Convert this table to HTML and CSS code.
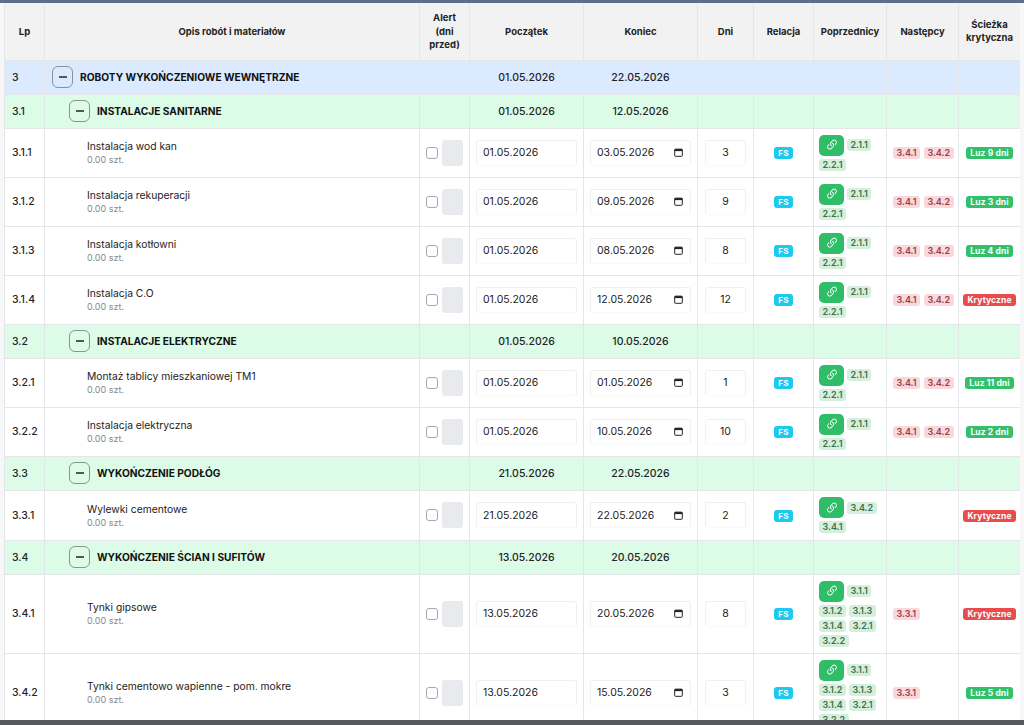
FILE: index.html
```html
<!DOCTYPE html>
<html lang="pl">
<head>
<meta charset="utf-8">
<title>Harmonogram</title>
<link rel="stylesheet" href="styles.css">
</head>
<body>
<div class="screen">
  <div class="topbar"></div>
  <div class="viewport">
    <div class="gutter gutter-left"></div>
    <div class="table-wrap">
      <table class="grid">
        <colgroup>
          <col class="c-lp"><col class="c-opis"><col class="c-alert"><col class="c-date"><col class="c-date">
          <col class="c-dni"><col class="c-rel"><col class="c-prev"><col class="c-next"><col class="c-crit">
        </colgroup>
        <thead>
          <tr class="head">
            <th>Lp</th>
            <th>Opis robót i materiałów</th>
            <th>Alert<br>(dni<br>przed)</th>
            <th>Początek</th>
            <th>Koniec</th>
            <th>Dni</th>
            <th>Relacja</th>
            <th>Poprzednicy</th>
            <th>Następcy</th>
            <th>Ścieżka<br>krytyczna</th>
          </tr>
        </thead>
        <tbody>
          <tr class="group lvl1">
            <td class="lp">3</td>
            <td class="opis"><div class="gtitle"><span class="toggle"></span><span>ROBOTY WYKOŃCZENIOWE WEWNĘTRZNE</span></div></td>
            <td></td><td class="gdate">01.05.2026</td><td class="gdate">22.05.2026</td><td></td><td></td><td></td><td></td><td></td>
          </tr>
          <tr class="group lvl2">
            <td class="lp">3.1</td>
            <td class="opis"><div class="gtitle sub"><span class="toggle"></span><span>INSTALACJE SANITARNE</span></div></td>
            <td></td><td class="gdate">01.05.2026</td><td class="gdate">12.05.2026</td><td></td><td></td><td></td><td></td><td></td>
          </tr>

          <tr class="item">
            <td class="lp">3.1.1</td>
            <td class="opis"><div class="iname">Instalacja wod kan</div><div class="iqty">0.00 szt.</div></td>
            <td class="alert"><div class="alert-box"><input type="checkbox" class="chk"><span class="days"></span></div></td>
            <td class="pad"><div class="field">01.05.2026</div></td>
            <td class="pad"><div class="field">03.05.2026<svg class="cal" viewBox="0 0 10 10"><rect x="0.75" y="1.25" width="8.5" height="8" rx="1" fill="none" stroke="#222" stroke-width="1.1"/><rect x="0.75" y="1.25" width="8.5" height="2.2" fill="#222"/></svg></div></td>
            <td class="pad-dni"><div class="field num">3</div></td>
            <td class="center"><span class="fs">FS</span></td>
            <td class="prev"><div class="chips"><span class="link"><svg viewBox="0 0 16 16"><path fill="#fff" d="M4.715 6.542 3.343 7.914a3 3 0 1 0 4.243 4.243l1.828-1.829A3 3 0 0 0 8.586 5.5L8 6.086a1 1 0 0 0-.154.199 2 2 0 0 1 .861 3.337L6.88 11.45a2 2 0 1 1-2.83-2.83l.793-.792a4 4 0 0 1-.128-1.287z"/><path fill="#fff" d="M6.586 4.672A3 3 0 0 0 7.414 9.5l.775-.776a2 2 0 0 1-.896-3.346L9.12 3.55a2 2 0 1 1 2.83 2.83l-.793.792c.112.42.155.855.128 1.287l1.372-1.372a3 3 0 1 0-4.243-4.243z"/></svg></span><span class="chip g">2.1.1</span><span class="chip g">2.2.1</span></div></td>
            <td class="next"><div class="chips"><span class="chip r">3.4.1</span><span class="chip r">3.4.2</span></div></td>
            <td class="center"><span class="crit ok">Luz 9 dni</span></td>
          </tr>

          <tr class="item">
            <td class="lp">3.1.2</td>
            <td class="opis"><div class="iname">Instalacja rekuperacji</div><div class="iqty">0.00 szt.</div></td>
            <td class="alert"><div class="alert-box"><input type="checkbox" class="chk"><span class="days"></span></div></td>
            <td class="pad"><div class="field">01.05.2026</div></td>
            <td class="pad"><div class="field">09.05.2026<svg class="cal" viewBox="0 0 10 10"><rect x="0.75" y="1.25" width="8.5" height="8" rx="1" fill="none" stroke="#222" stroke-width="1.1"/><rect x="0.75" y="1.25" width="8.5" height="2.2" fill="#222"/></svg></div></td>
            <td class="pad-dni"><div class="field num">9</div></td>
            <td class="center"><span class="fs">FS</span></td>
            <td class="prev"><div class="chips"><span class="link"><svg viewBox="0 0 16 16"><path fill="#fff" d="M4.715 6.542 3.343 7.914a3 3 0 1 0 4.243 4.243l1.828-1.829A3 3 0 0 0 8.586 5.5L8 6.086a1 1 0 0 0-.154.199 2 2 0 0 1 .861 3.337L6.88 11.45a2 2 0 1 1-2.83-2.83l.793-.792a4 4 0 0 1-.128-1.287z"/><path fill="#fff" d="M6.586 4.672A3 3 0 0 0 7.414 9.5l.775-.776a2 2 0 0 1-.896-3.346L9.12 3.55a2 2 0 1 1 2.83 2.83l-.793.792c.112.42.155.855.128 1.287l1.372-1.372a3 3 0 1 0-4.243-4.243z"/></svg></span><span class="chip g">2.1.1</span><span class="chip g">2.2.1</span></div></td>
            <td class="next"><div class="chips"><span class="chip r">3.4.1</span><span class="chip r">3.4.2</span></div></td>
            <td class="center"><span class="crit ok">Luz 3 dni</span></td>
          </tr>

          <tr class="item">
            <td class="lp">3.1.3</td>
            <td class="opis"><div class="iname">Instalacja kotłowni</div><div class="iqty">0.00 szt.</div></td>
            <td class="alert"><div class="alert-box"><input type="checkbox" class="chk"><span class="days"></span></div></td>
            <td class="pad"><div class="field">01.05.2026</div></td>
            <td class="pad"><div class="field">08.05.2026<svg class="cal" viewBox="0 0 10 10"><rect x="0.75" y="1.25" width="8.5" height="8" rx="1" fill="none" stroke="#222" stroke-width="1.1"/><rect x="0.75" y="1.25" width="8.5" height="2.2" fill="#222"/></svg></div></td>
            <td class="pad-dni"><div class="field num">8</div></td>
            <td class="center"><span class="fs">FS</span></td>
            <td class="prev"><div class="chips"><span class="link"><svg viewBox="0 0 16 16"><path fill="#fff" d="M4.715 6.542 3.343 7.914a3 3 0 1 0 4.243 4.243l1.828-1.829A3 3 0 0 0 8.586 5.5L8 6.086a1 1 0 0 0-.154.199 2 2 0 0 1 .861 3.337L6.88 11.45a2 2 0 1 1-2.83-2.83l.793-.792a4 4 0 0 1-.128-1.287z"/><path fill="#fff" d="M6.586 4.672A3 3 0 0 0 7.414 9.5l.775-.776a2 2 0 0 1-.896-3.346L9.12 3.55a2 2 0 1 1 2.83 2.83l-.793.792c.112.42.155.855.128 1.287l1.372-1.372a3 3 0 1 0-4.243-4.243z"/></svg></span><span class="chip g">2.1.1</span><span class="chip g">2.2.1</span></div></td>
            <td class="next"><div class="chips"><span class="chip r">3.4.1</span><span class="chip r">3.4.2</span></div></td>
            <td class="center"><span class="crit ok">Luz 4 dni</span></td>
          </tr>

          <tr class="item">
            <td class="lp">3.1.4</td>
            <td class="opis"><div class="iname">Instalacja C.O</div><div class="iqty">0.00 szt.</div></td>
            <td class="alert"><div class="alert-box"><input type="checkbox" class="chk"><span class="days"></span></div></td>
            <td class="pad"><div class="field">01.05.2026</div></td>
            <td class="pad"><div class="field">12.05.2026<svg class="cal" viewBox="0 0 10 10"><rect x="0.75" y="1.25" width="8.5" height="8" rx="1" fill="none" stroke="#222" stroke-width="1.1"/><rect x="0.75" y="1.25" width="8.5" height="2.2" fill="#222"/></svg></div></td>
            <td class="pad-dni"><div class="field num">12</div></td>
            <td class="center"><span class="fs">FS</span></td>
            <td class="prev"><div class="chips"><span class="link"><svg viewBox="0 0 16 16"><path fill="#fff" d="M4.715 6.542 3.343 7.914a3 3 0 1 0 4.243 4.243l1.828-1.829A3 3 0 0 0 8.586 5.5L8 6.086a1 1 0 0 0-.154.199 2 2 0 0 1 .861 3.337L6.88 11.45a2 2 0 1 1-2.83-2.83l.793-.792a4 4 0 0 1-.128-1.287z"/><path fill="#fff" d="M6.586 4.672A3 3 0 0 0 7.414 9.5l.775-.776a2 2 0 0 1-.896-3.346L9.12 3.55a2 2 0 1 1 2.83 2.83l-.793.792c.112.42.155.855.128 1.287l1.372-1.372a3 3 0 1 0-4.243-4.243z"/></svg></span><span class="chip g">2.1.1</span><span class="chip g">2.2.1</span></div></td>
            <td class="next"><div class="chips"><span class="chip r">3.4.1</span><span class="chip r">3.4.2</span></div></td>
            <td class="center"><span class="crit bad">Krytyczne</span></td>
          </tr>

          <tr class="group lvl2">
            <td class="lp">3.2</td>
            <td class="opis"><div class="gtitle sub"><span class="toggle"></span><span>INSTALACJE ELEKTRYCZNE</span></div></td>
            <td></td><td class="gdate">01.05.2026</td><td class="gdate">10.05.2026</td><td></td><td></td><td></td><td></td><td></td>
          </tr>

          <tr class="item">
            <td class="lp">3.2.1</td>
            <td class="opis"><div class="iname">Montaż tablicy mieszkaniowej TM1</div><div class="iqty">0.00 szt.</div></td>
            <td class="alert"><div class="alert-box"><input type="checkbox" class="chk"><span class="days"></span></div></td>
            <td class="pad"><div class="field">01.05.2026</div></td>
            <td class="pad"><div class="field">01.05.2026<svg class="cal" viewBox="0 0 10 10"><rect x="0.75" y="1.25" width="8.5" height="8" rx="1" fill="none" stroke="#222" stroke-width="1.1"/><rect x="0.75" y="1.25" width="8.5" height="2.2" fill="#222"/></svg></div></td>
            <td class="pad-dni"><div class="field num">1</div></td>
            <td class="center"><span class="fs">FS</span></td>
            <td class="prev"><div class="chips"><span class="link"><svg viewBox="0 0 16 16"><path fill="#fff" d="M4.715 6.542 3.343 7.914a3 3 0 1 0 4.243 4.243l1.828-1.829A3 3 0 0 0 8.586 5.5L8 6.086a1 1 0 0 0-.154.199 2 2 0 0 1 .861 3.337L6.88 11.45a2 2 0 1 1-2.83-2.83l.793-.792a4 4 0 0 1-.128-1.287z"/><path fill="#fff" d="M6.586 4.672A3 3 0 0 0 7.414 9.5l.775-.776a2 2 0 0 1-.896-3.346L9.12 3.55a2 2 0 1 1 2.83 2.83l-.793.792c.112.42.155.855.128 1.287l1.372-1.372a3 3 0 1 0-4.243-4.243z"/></svg></span><span class="chip g">2.1.1</span><span class="chip g">2.2.1</span></div></td>
            <td class="next"><div class="chips"><span class="chip r">3.4.1</span><span class="chip r">3.4.2</span></div></td>
            <td class="center"><span class="crit ok">Luz 11 dni</span></td>
          </tr>

          <tr class="item">
            <td class="lp">3.2.2</td>
            <td class="opis"><div class="iname">Instalacja elektryczna</div><div class="iqty">0.00 szt.</div></td>
            <td class="alert"><div class="alert-box"><input type="checkbox" class="chk"><span class="days"></span></div></td>
            <td class="pad"><div class="field">01.05.2026</div></td>
            <td class="pad"><div class="field">10.05.2026<svg class="cal" viewBox="0 0 10 10"><rect x="0.75" y="1.25" width="8.5" height="8" rx="1" fill="none" stroke="#222" stroke-width="1.1"/><rect x="0.75" y="1.25" width="8.5" height="2.2" fill="#222"/></svg></div></td>
            <td class="pad-dni"><div class="field num">10</div></td>
            <td class="center"><span class="fs">FS</span></td>
            <td class="prev"><div class="chips"><span class="link"><svg viewBox="0 0 16 16"><path fill="#fff" d="M4.715 6.542 3.343 7.914a3 3 0 1 0 4.243 4.243l1.828-1.829A3 3 0 0 0 8.586 5.5L8 6.086a1 1 0 0 0-.154.199 2 2 0 0 1 .861 3.337L6.88 11.45a2 2 0 1 1-2.83-2.83l.793-.792a4 4 0 0 1-.128-1.287z"/><path fill="#fff" d="M6.586 4.672A3 3 0 0 0 7.414 9.5l.775-.776a2 2 0 0 1-.896-3.346L9.12 3.55a2 2 0 1 1 2.83 2.83l-.793.792c.112.42.155.855.128 1.287l1.372-1.372a3 3 0 1 0-4.243-4.243z"/></svg></span><span class="chip g">2.1.1</span><span class="chip g">2.2.1</span></div></td>
            <td class="next"><div class="chips"><span class="chip r">3.4.1</span><span class="chip r">3.4.2</span></div></td>
            <td class="center"><span class="crit ok">Luz 2 dni</span></td>
          </tr>

          <tr class="group lvl2">
            <td class="lp">3.3</td>
            <td class="opis"><div class="gtitle sub"><span class="toggle"></span><span>WYKOŃCZENIE PODŁÓG</span></div></td>
            <td></td><td class="gdate">21.05.2026</td><td class="gdate">22.05.2026</td><td></td><td></td><td></td><td></td><td></td>
          </tr>

          <tr class="item i50">
            <td class="lp">3.3.1</td>
            <td class="opis"><div class="iname">Wylewki cementowe</div><div class="iqty">0.00 szt.</div></td>
            <td class="alert"><div class="alert-box"><input type="checkbox" class="chk"><span class="days"></span></div></td>
            <td class="pad"><div class="field">21.05.2026</div></td>
            <td class="pad"><div class="field">22.05.2026<svg class="cal" viewBox="0 0 10 10"><rect x="0.75" y="1.25" width="8.5" height="8" rx="1" fill="none" stroke="#222" stroke-width="1.1"/><rect x="0.75" y="1.25" width="8.5" height="2.2" fill="#222"/></svg></div></td>
            <td class="pad-dni"><div class="field num">2</div></td>
            <td class="center"><span class="fs">FS</span></td>
            <td class="prev"><div class="chips"><span class="link"><svg viewBox="0 0 16 16"><path fill="#fff" d="M4.715 6.542 3.343 7.914a3 3 0 1 0 4.243 4.243l1.828-1.829A3 3 0 0 0 8.586 5.5L8 6.086a1 1 0 0 0-.154.199 2 2 0 0 1 .861 3.337L6.88 11.45a2 2 0 1 1-2.83-2.83l.793-.792a4 4 0 0 1-.128-1.287z"/><path fill="#fff" d="M6.586 4.672A3 3 0 0 0 7.414 9.5l.775-.776a2 2 0 0 1-.896-3.346L9.12 3.55a2 2 0 1 1 2.83 2.83l-.793.792c.112.42.155.855.128 1.287l1.372-1.372a3 3 0 1 0-4.243-4.243z"/></svg></span><span class="chip g">3.4.2</span><span class="chip g">3.4.1</span></div></td>
            <td class="next"></td>
            <td class="center"><span class="crit bad">Krytyczne</span></td>
          </tr>

          <tr class="group lvl2">
            <td class="lp">3.4</td>
            <td class="opis"><div class="gtitle sub"><span class="toggle"></span><span>WYKOŃCZENIE ŚCIAN I SUFITÓW</span></div></td>
            <td></td><td class="gdate">13.05.2026</td><td class="gdate">20.05.2026</td><td></td><td></td><td></td><td></td><td></td>
          </tr>

          <tr class="item">
            <td class="lp">3.4.1</td>
            <td class="opis"><div class="iname">Tynki gipsowe</div><div class="iqty">0.00 szt.</div></td>
            <td class="alert"><div class="alert-box"><input type="checkbox" class="chk"><span class="days"></span></div></td>
            <td class="pad"><div class="field">13.05.2026</div></td>
            <td class="pad"><div class="field">20.05.2026<svg class="cal" viewBox="0 0 10 10"><rect x="0.75" y="1.25" width="8.5" height="8" rx="1" fill="none" stroke="#222" stroke-width="1.1"/><rect x="0.75" y="1.25" width="8.5" height="2.2" fill="#222"/></svg></div></td>
            <td class="pad-dni"><div class="field num">8</div></td>
            <td class="center"><span class="fs">FS</span></td>
            <td class="prev"><div class="chips"><span class="link"><svg viewBox="0 0 16 16"><path fill="#fff" d="M4.715 6.542 3.343 7.914a3 3 0 1 0 4.243 4.243l1.828-1.829A3 3 0 0 0 8.586 5.5L8 6.086a1 1 0 0 0-.154.199 2 2 0 0 1 .861 3.337L6.88 11.45a2 2 0 1 1-2.83-2.83l.793-.792a4 4 0 0 1-.128-1.287z"/><path fill="#fff" d="M6.586 4.672A3 3 0 0 0 7.414 9.5l.775-.776a2 2 0 0 1-.896-3.346L9.12 3.55a2 2 0 1 1 2.83 2.83l-.793.792c.112.42.155.855.128 1.287l1.372-1.372a3 3 0 1 0-4.243-4.243z"/></svg></span><span class="chip g">3.1.1</span><span class="chip g">3.1.2</span><span class="chip g">3.1.3</span><span class="chip g">3.1.4</span><span class="chip g">3.2.1</span><span class="chip g">3.2.2</span></div></td>
            <td class="next"><div class="chips"><span class="chip r">3.3.1</span></div></td>
            <td class="center"><span class="crit bad">Krytyczne</span></td>
          </tr>

          <tr class="item">
            <td class="lp">3.4.2</td>
            <td class="opis"><div class="iname">Tynki cementowo wapienne - pom. mokre</div><div class="iqty">0.00 szt.</div></td>
            <td class="alert"><div class="alert-box"><input type="checkbox" class="chk"><span class="days"></span></div></td>
            <td class="pad"><div class="field">13.05.2026</div></td>
            <td class="pad"><div class="field">15.05.2026<svg class="cal" viewBox="0 0 10 10"><rect x="0.75" y="1.25" width="8.5" height="8" rx="1" fill="none" stroke="#222" stroke-width="1.1"/><rect x="0.75" y="1.25" width="8.5" height="2.2" fill="#222"/></svg></div></td>
            <td class="pad-dni"><div class="field num">3</div></td>
            <td class="center"><span class="fs">FS</span></td>
            <td class="prev"><div class="chips"><span class="link"><svg viewBox="0 0 16 16"><path fill="#fff" d="M4.715 6.542 3.343 7.914a3 3 0 1 0 4.243 4.243l1.828-1.829A3 3 0 0 0 8.586 5.5L8 6.086a1 1 0 0 0-.154.199 2 2 0 0 1 .861 3.337L6.88 11.45a2 2 0 1 1-2.83-2.83l.793-.792a4 4 0 0 1-.128-1.287z"/><path fill="#fff" d="M6.586 4.672A3 3 0 0 0 7.414 9.5l.775-.776a2 2 0 0 1-.896-3.346L9.12 3.55a2 2 0 1 1 2.83 2.83l-.793.792c.112.42.155.855.128 1.287l1.372-1.372a3 3 0 1 0-4.243-4.243z"/></svg></span><span class="chip g">3.1.1</span><span class="chip g">3.1.2</span><span class="chip g">3.1.3</span><span class="chip g">3.1.4</span><span class="chip g">3.2.1</span><span class="chip g">3.2.2</span></div></td>
            <td class="next"><div class="chips"><span class="chip r">3.3.1</span></div></td>
            <td class="center"><span class="crit ok">Luz 5 dni</span></td>
          </tr>
        </tbody>
      </table>
    </div>
    <div class="gutter gutter-right"></div>
  </div>
  <div class="bottombar"></div>
</div>
</body>
</html>
```
FILE: styles.css
```css
* { box-sizing: border-box; }
html, body { margin: 0; padding: 0; }
body {
  font-family: "Inter", "Noto Sans", sans-serif;
  color: #1f2328;
  background: #f7f7f8;
}
.screen {
  width: 1024px;
  height: 725px;
  display: flex;
  flex-direction: column;
  overflow: hidden;
}
.topbar { height: 3px; flex: none; background: #5b6e8c; }
.bottombar { height: 5px; flex: none; background: #56595f; }
.viewport { flex: 1; display: flex; min-height: 0; }
.gutter { flex: none; background: #f7f7f8; }
.gutter-left { width: 4px; }
.gutter-right { width: 4px; }
.table-wrap {
  width: 1016px;
  flex: none;
  overflow: hidden;
  background: #fff;
}
.grid {
  width: 1016px;
  table-layout: fixed;
  border-collapse: collapse;
  font-size: 10.5px;
}
.c-lp { width: 40px; }
.c-opis { width: 375px; }
.c-alert { width: 50px; }
.c-date { width: 114px; }
.c-dni { width: 56px; }
.c-rel { width: 60px; }
.c-prev { width: 73px; }
.c-next { width: 72px; }
.c-crit { width: 62px; }

.grid th, .grid td {
  border: 1px solid #e4e6e9;
  vertical-align: middle;
  padding: 0;
}
.head th {
  height: 57px;
  background: #f2f2f2;
  font-size: 9.5px;
  font-weight: 700;
  line-height: 13.5px;
  color: #222;
  text-align: center;
  border-top: none;
}
.group td { height: 34px; }
.group.lvl1 td { background: #dbeafe; }
.group.lvl2 td { background: #dcfce7; }
.item td { height: 49px; background: #fff; }
.item.i50 td { height: 50px; }

.lp { padding-left: 7px !important; font-size: 10.5px; font-weight: 500; }
.opis { padding-left: 7px !important; }
.gtitle {
  display: flex;
  align-items: center;
  gap: 7px;
  font-weight: 700;
  font-size: 10.2px;
  color: #111;
}
.gtitle.sub { padding-left: 17px; }
.toggle {
  width: 21px;
  height: 22px;
  border: 1px solid #8d9197;
  border-radius: 6px;
  display: flex;
  align-items: center;
  justify-content: center;
  flex: none;
}
.toggle::before {
  content: "";
  width: 8px;
  height: 1.2px;
  background: #555;
}
.gdate { text-align: center; font-weight: 500; font-size: 10.5px; }
.iname { padding-left: 35px; font-size: 10.3px; color: #222; line-height: 14px; }
.iqty { padding-left: 35px; font-size: 9px; color: #858a90; line-height: 13px; }

.alert-box { display: flex; align-items: center; gap: 4px; padding-left: 6px; }
.chk {
  appearance: none;
  -webkit-appearance: none;
  width: 12px;
  height: 12px;
  margin: 0;
  border: 1px solid #a4a8ad;
  border-radius: 3px;
  background: #fff;
}
.days { width: 21px; height: 26px; border-radius: 3px; background: #e9eaee; }

.pad { padding: 0 6px !important; }
.pad-dni { padding: 0 7px !important; }
.field {
  height: 26px;
  border: 1px solid #eef0f2;
  border-bottom-color: #f8f9fa;
  border-radius: 3px;
  display: flex;
  align-items: center;
  justify-content: space-between;
  padding: 0 6px;
  font-size: 10.5px;
  color: #222;
}
.field.num { justify-content: center; padding: 0; }
.cal { width: 9px; height: 9px; margin-right: 1px; }

.center { text-align: center; }
.fs {
  display: inline-block;
  background: #1ec9ef;
  color: #fff;
  font-size: 8px;
  font-weight: 700;
  line-height: 12px;
  height: 12px;
  padding: 0 4px;
  border-radius: 3px;
  letter-spacing: 0.3px;
}
.prev { padding: 6px 3px 6px 5px !important; }
.next { padding: 0 4px 0 6px !important; }
.chips { display: flex; flex-wrap: wrap; gap: 3px; align-items: center; }
.link {
  width: 25px;
  height: 21px;
  border-radius: 5px;
  background: #2fbd68;
  display: flex;
  align-items: center;
  justify-content: center;
}
.link svg { width: 14px; height: 14px; }
.chip {
  height: 12px;
  line-height: 12px;
  padding: 0 3.5px;
  border-radius: 3px;
  font-size: 9px;
  font-weight: 600;
}
.chip.g { background: #d4f0dc; color: #3d6e4d; }
.chip.r { background: #fad7db; color: #983c4a; }
.next .chips { gap: 4px; }
.crit {
  display: inline-block;
  height: 12px;
  line-height: 12px;
  padding: 0 4px;
  border-radius: 3px;
  color: #fff;
  font-size: 8.5px;
  font-weight: 700;
  letter-spacing: 0.1px;
}
.crit.ok { background: #33c06b; }
.crit.bad { background: #ea4b4c; }
```
